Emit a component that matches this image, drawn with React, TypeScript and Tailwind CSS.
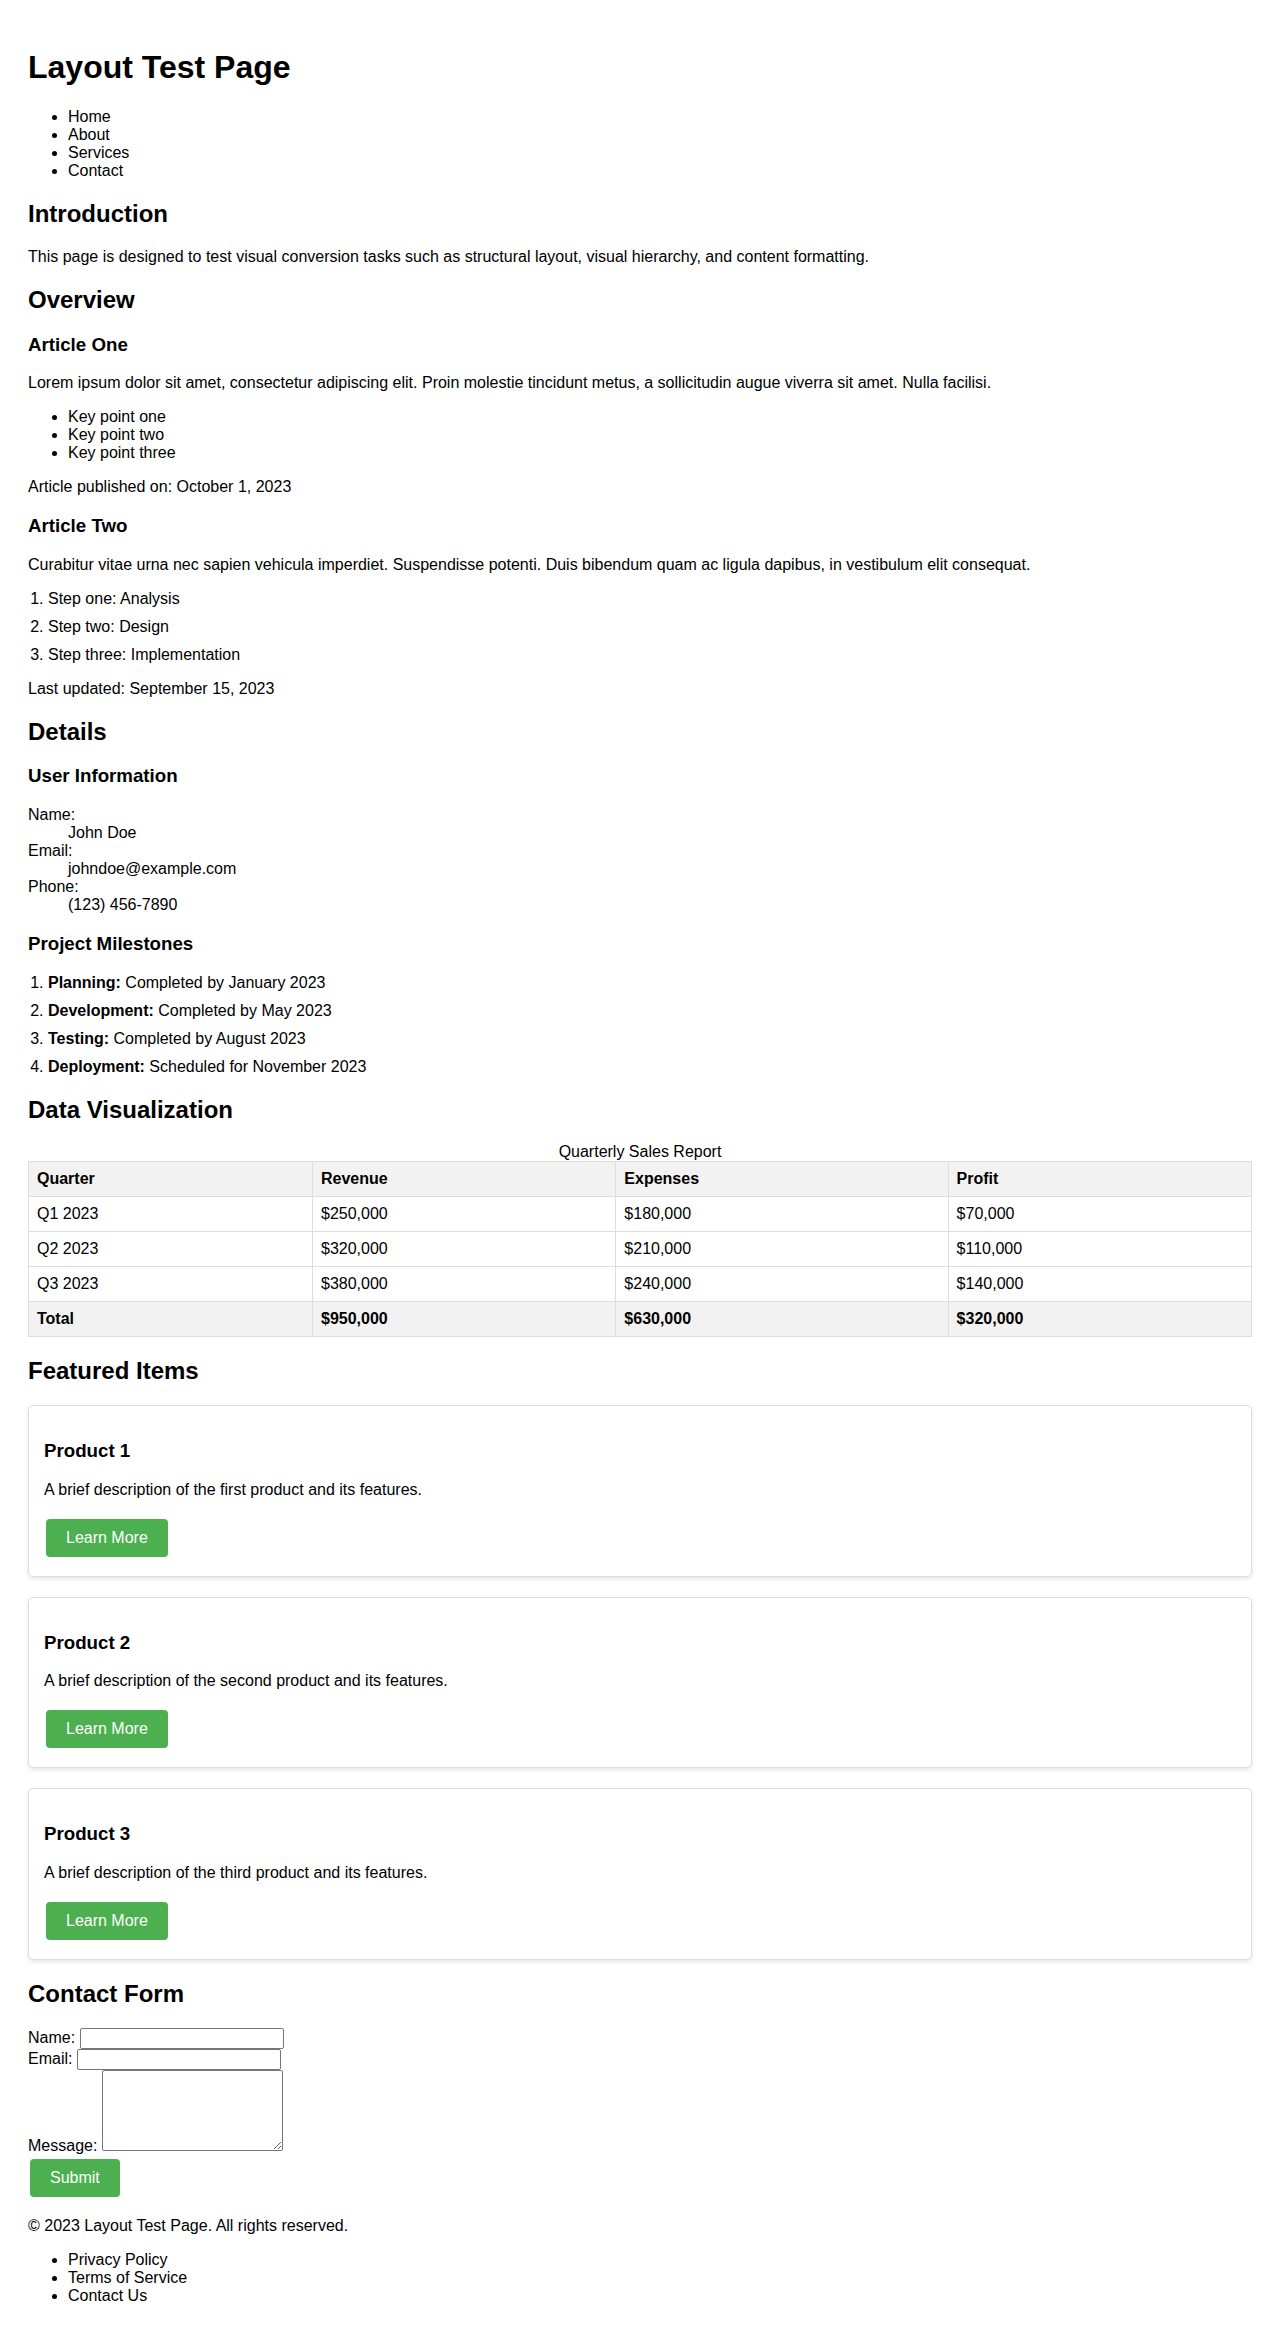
import React from "react";

const products = [
  { name: "Product 1", desc: "A brief description of the first product and its features." },
  { name: "Product 2", desc: "A brief description of the second product and its features." },
  { name: "Product 3", desc: "A brief description of the third product and its features." },
];

const rows = [
  ["Q1 2023", "$250,000", "$180,000", "$70,000"],
  ["Q2 2023", "$320,000", "$210,000", "$110,000"],
  ["Q3 2023", "$380,000", "$240,000", "$140,000"],
];

const btn =
  "inline-block mx-[2px] my-[4px] px-5 py-2.5 bg-[#4CAF50] text-white rounded-[4px] leading-[normal] text-[16px] cursor-pointer";

export default function App() {
  return (
    <div className="m-2 p-5 font-['Liberation_Sans',Arial,Helvetica,sans-serif] text-[16px] leading-[normal] text-black bg-white">
      <header>
        <h1 className="text-[32px] font-bold my-[21.44px]">Layout Test Page</h1>
        <nav>
          <ul className="list-disc pl-10 my-4">
            <li>Home</li>
            <li>About</li>
            <li>Services</li>
            <li>Contact</li>
          </ul>
        </nav>
      </header>

      <main>
        <section>
          <h2 className="text-[24px] font-bold my-[19.92px]">Introduction</h2>
          <p className="my-4">
            This page is designed to test visual conversion tasks such as structural layout, visual hierarchy, and content formatting.
          </p>
        </section>

        <section>
          <h2 className="text-[24px] font-bold my-[19.92px]">Overview</h2>
          <article>
            <h3 className="text-[18.72px] font-bold my-[18.72px]">Article One</h3>
            <p className="my-4">
              Lorem ipsum dolor sit amet, consectetur adipiscing elit. Proin molestie tincidunt metus, a sollicitudin augue viverra sit amet. Nulla facilisi.
            </p>
            <ul className="list-disc pl-10 my-4">
              <li>Key point one</li>
              <li>Key point two</li>
              <li>Key point three</li>
            </ul>
            <p className="my-4">Article published on: October 1, 2023</p>
          </article>
          <article>
            <h3 className="text-[18.72px] font-bold my-[18.72px]">Article Two</h3>
            <p className="my-4">
              Curabitur vitae urna nec sapien vehicula imperdiet. Suspendisse potenti. Duis bibendum quam ac ligula dapibus, in vestibulum elit consequat.
            </p>
            <ol className="list-decimal pl-5 my-4">
              <li className="mb-[10px]">Step one: Analysis</li>
              <li className="mb-[10px]">Step two: Design</li>
              <li className="mb-[10px]">Step three: Implementation</li>
            </ol>
            <p className="my-4">Last updated: September 15, 2023</p>
          </article>
        </section>

        <section>
          <h2 className="text-[24px] font-bold my-[19.92px]">Details</h2>
          <h3 className="text-[18.72px] font-bold my-[18.72px]">User Information</h3>
          <dl className="my-4">
            <dt>Name:</dt>
            <dd className="ml-10">John Doe</dd>
            <dt>Email:</dt>
            <dd className="ml-10">johndoe@example.com</dd>
            <dt>Phone:</dt>
            <dd className="ml-10">(123) 456-7890</dd>
          </dl>
          <h3 className="text-[18.72px] font-bold my-[18.72px]">Project Milestones</h3>
          <ol className="list-decimal pl-5 my-4">
            <li className="mb-[10px]">
              <strong className="font-bold">Planning:</strong> Completed by January 2023
            </li>
            <li className="mb-[10px]">
              <strong className="font-bold">Development:</strong> Completed by May 2023
            </li>
            <li className="mb-[10px]">
              <strong className="font-bold">Testing:</strong> Completed by August 2023
            </li>
            <li className="mb-[10px]">
              <strong className="font-bold">Deployment:</strong> Scheduled for November 2023
            </li>
          </ol>
        </section>

        <section>
          <h2 className="text-[24px] font-bold my-[19.92px]">Data Visualization</h2>
          <table className="w-full border-collapse">
            <caption className="text-center">Quarterly Sales Report</caption>
            <thead>
              <tr>
                <th className="text-left font-bold p-2 border border-[#ddd] bg-[#f2f2f2]">Quarter</th>
                <th className="text-left font-bold p-2 border border-[#ddd] bg-[#f2f2f2]">Revenue</th>
                <th className="text-left font-bold p-2 border border-[#ddd] bg-[#f2f2f2]">Expenses</th>
                <th className="text-left font-bold p-2 border border-[#ddd] bg-[#f2f2f2]">Profit</th>
              </tr>
            </thead>
            <tbody>
              {rows.map((r) => (
                <tr key={r[0]}>
                  {r.map((c, i) => (
                    <td key={i} className="text-left p-2 border border-[#ddd]">
                      {c}
                    </td>
                  ))}
                </tr>
              ))}
            </tbody>
            <tfoot>
              <tr>
                <th className="text-left font-bold p-2 border border-[#ddd] bg-[#f2f2f2]">Total</th>
                <th className="text-left font-bold p-2 border border-[#ddd] bg-[#f2f2f2]">$950,000</th>
                <th className="text-left font-bold p-2 border border-[#ddd] bg-[#f2f2f2]">$630,000</th>
                <th className="text-left font-bold p-2 border border-[#ddd] bg-[#f2f2f2]">$320,000</th>
              </tr>
            </tfoot>
          </table>
        </section>

        <section>
          <h2 className="text-[24px] font-bold my-[19.92px]">Featured Items</h2>
          {products.map((p) => (
            <div
              key={p.name}
              className="my-5 border border-[#ddd] rounded-[5px] p-[15px] shadow-[0_2px_4px_rgba(0,0,0,0.1)]"
            >
              <h3 className="text-[18.72px] font-bold my-[18.72px]">{p.name}</h3>
              <p className="my-4">{p.desc}</p>
              <button type="button" className={btn}>
                Learn More
              </button>
            </div>
          ))}
        </section>

        <section>
          <h2 className="text-[24px] font-bold my-[19.92px]">Contact Form</h2>
          <form onSubmit={(e) => e.preventDefault()}>
            <label htmlFor="name">Name:</label>{" "}
            <input
              id="name"
              type="text"
              className="w-[204px] border border-[#767676] rounded-[2px] px-[2px] py-[2px] text-[13.333px] leading-[normal] align-baseline bg-white"
            />
            <br />
            <label htmlFor="email">Email:</label>{" "}
            <input
              id="email"
              type="email"
              className="w-[204px] border border-[#767676] rounded-[2px] px-[2px] py-[2px] text-[13.333px] leading-[normal] align-baseline bg-white"
            />
            <br />
            <label htmlFor="message">Message:</label>{" "}
            <textarea
              id="message"
              className="w-[181px] h-[81px] border border-[#767676] rounded-[2px] px-[2px] py-[2px] text-[13.333px] leading-[normal] align-baseline bg-white"
            />
            <br />
            <button type="submit" className={btn}>
              Submit
            </button>
          </form>
        </section>
      </main>

      <footer>
        <p className="my-4">© 2023 Layout Test Page. All rights reserved.</p>
        <ul className="list-disc pl-10 my-4">
          <li>Privacy Policy</li>
          <li>Terms of Service</li>
          <li>Contact Us</li>
        </ul>
      </footer>
    </div>
  );
}
